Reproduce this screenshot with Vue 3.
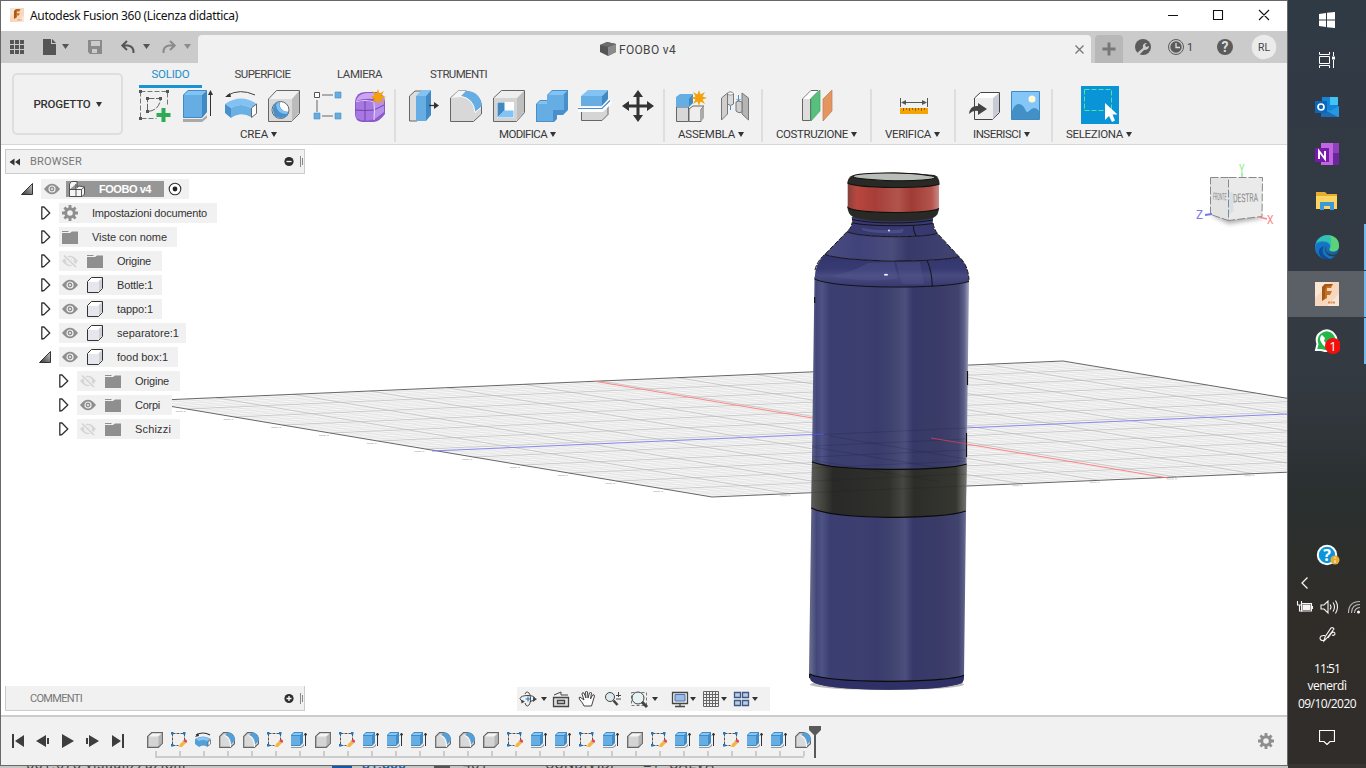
<script setup>
const vFit = {
  mounted(el, { value }) {
    const w = el.getBoundingClientRect().width
    el.style.letterSpacing = (value - w) / el.textContent.length + 'px'
  }
}

const tabs = [
  { t: 'SOLIDO', w: 38, c: 'solid' },
  { t: 'SUPERFICIE', w: 56, c: 'surface' },
  { t: 'LAMIERA', w: 45, c: 'sheet' },
  { t: 'STRUMENTI', w: 57, c: 'tools' }
]
const groups = [
  { t: 'CREA', w: 28, c: 'crea', icons: ['sketch', 'extrude', 'revolve', 'hole', 'pattern', 'form'] },
  { t: 'MODIFICA', w: 48, c: 'modifica', icons: ['press', 'fillet', 'shell', 'combine', 'split', 'move'] },
  { t: 'ASSEMBLA', w: 57, c: 'assembla', icons: ['newcomp', 'joint'] },
  { t: 'COSTRUZIONE', w: 72, c: 'costruzione', icons: ['plane'] },
  { t: 'VERIFICA', w: 46, c: 'verifica', icons: ['measure'] },
  { t: 'INSERISCI', w: 48, c: 'inserisci', icons: ['derive', 'canvas'] },
  { t: 'SELEZIONA', w: 57, c: 'seleziona', icons: ['select'] }
]
const rows = [
  { t: 'Impostazioni documento', w: 115, icon: 'gear', bw: 158 },
  { t: 'Viste con nome', w: 75, icon: 'folder', bw: 118 },
  { t: 'Origine', w: 34, eye: 'off', icon: 'folder', bw: 103 },
  { t: 'Bottle:1', w: 36, eye: 'on', icon: 'box', bw: 103 },
  { t: 'tappo:1', w: 36, eye: 'on', icon: 'box', bw: 103 },
  { t: 'separatore:1', w: 62, eye: 'on', icon: 'box', bw: 127 },
  { t: 'food box:1', w: 51, eye: 'on', icon: 'box', bw: 119, open: true },
  { t: 'Origine', w: 34, eye: 'off', icon: 'folder', bw: 103, deep: true },
  { t: 'Corpi', w: 25, eye: 'on', icon: 'folder', bw: 95, deep: true },
  { t: 'Schizzi', w: 36, eye: 'off', icon: 'folder', bw: 103, deep: true }
]
const kinds = { b: 'box3', s: 'sk', r: 'rev', f: 'fil', e: 'ext' }
const timeline = [...'bsrffsebseeeffbseesebseeseef'].map(k => kinds[k])

const L = [139, 401], T = [1063, 361], B = [712, 497], R = [1640, 457]
const mix = (p, q, t) => [p[0] + (q[0] - p[0]) * t, p[1] + (q[1] - p[1]) * t]
const seg = (p, q) => `M${p[0].toFixed(1)} ${p[1].toFixed(1)}L${q[0].toFixed(1)} ${q[1].toFixed(1)}`
let minor = '', major = '', ticks = ''
for (let i = 1; i < 60; i++) {
  const t = i / 60
  const d = seg(mix(L, B, t), mix(T, R, t)) + seg(mix(L, T, t), mix(B, R, t))
  if (i % 5) minor += d
  else major += d
}
for (let i = 1; i < 12; i++) {
  const p = mix(L, B, i / 12)
  ticks += `M${p[0] - 11} ${p[1] + 2.5}h10`
  const q = mix(B, R, i / 12)
  ticks += `M${q[0] - 9} ${q[1] + 2}h10`
}
</script>

<template>
  <div class="screen">
    <svg class="defs" width="0" height="0">
      <defs>
        <linearGradient id="body" x1="811" x2="968" y1="0" y2="0" gradientUnits="userSpaceOnUse">
          <stop offset="0" stop-color="#62678a" /><stop offset=".035" stop-color="#424778" />
          <stop offset=".07" stop-color="#4e5386" /><stop offset=".12" stop-color="#3b3e70" />
          <stop offset=".32" stop-color="#3c3f70" /><stop offset=".42" stop-color="#393c6d" />
          <stop offset=".52" stop-color="#40446f" /><stop offset=".6" stop-color="#4c4e7c" />
          <stop offset=".65" stop-color="#363868" /><stop offset=".82" stop-color="#3a3c67" />
          <stop offset=".94" stop-color="#41446f" /><stop offset=".975" stop-color="#5c6088" />
          <stop offset="1" stop-color="#9397b2" />
        </linearGradient>
        <linearGradient id="band" x1="811" x2="967" y1="0" y2="0" gradientUnits="userSpaceOnUse">
          <stop offset="0" stop-color="#5b5c57" /><stop offset=".08" stop-color="#41423c" />
          <stop offset=".14" stop-color="#292a27" /><stop offset=".5" stop-color="#30312d" />
          <stop offset=".59" stop-color="#464742" /><stop offset=".66" stop-color="#2c2d28" />
          <stop offset=".93" stop-color="#373732" /><stop offset="1" stop-color="#777873" />
        </linearGradient>
        <linearGradient id="red" x1="0" x2="1" y1="0" y2="0">
          <stop offset="0" stop-color="#87403c" /><stop offset=".1" stop-color="#b8473e" />
          <stop offset=".3" stop-color="#a63e37" /><stop offset=".55" stop-color="#b1544c" />
          <stop offset=".7" stop-color="#9e3b34" /><stop offset=".92" stop-color="#b3554d" />
          <stop offset="1" stop-color="#c98b86" />
        </linearGradient>
        <linearGradient id="cone" x1="825" x2="959" y1="0" y2="0" gradientUnits="userSpaceOnUse">
          <stop offset="0" stop-color="#4a4d80" /><stop offset=".25" stop-color="#40427a" />
          <stop offset=".5" stop-color="#4a4c7c" /><stop offset=".62" stop-color="#373969" />
          <stop offset="1" stop-color="#414472" />
        </linearGradient>
        <linearGradient id="shoulder" x1="0" x2="0" y1="0" y2="1">
          <stop offset="0" stop-color="#32346e" /><stop offset=".45" stop-color="#383a72" />
          <stop offset=".65" stop-color="#484b80" /><stop offset="1" stop-color="#36386f" />
        </linearGradient>
        <linearGradient id="tri" x1="0" x2="1" y1="1" y2="0"><stop offset="0" stop-color="#333" /><stop offset="1" stop-color="#ccc" /></linearGradient>
        <linearGradient id="edge" x1="0" x2="1" y1="0" y2="1"><stop offset="0" stop-color="#1c9bd9" /><stop offset="1" stop-color="#0e4f9b" /></linearGradient>
        <filter id="soft" x="-30%" y="-30%" width="160%" height="160%"><feGaussianBlur stdDeviation="2.2" /></filter>
      </defs>

      <!-- ribbon icons -->
      <symbol id="sketch" viewBox="0 0 34 34">
        <path d="M2.500 2.500h27v15M2.500 2.500v27h16" fill="none" stroke="#777" stroke-dasharray="5 2" />
        <path d="M9.500 9.500h13q-1 12-13 13z" fill="none" stroke="#666" stroke-dasharray="7 1.500" />
        <path d="M1 1h3v3H1zM28 1h3v3h-3zM1 28h3v3H1zM8 8h3v3H8zM21 8h3v3h-3zM8 21h3v3H8z" fill="#555" />
        <path d="M23.500 19h4v5h5v4h-5v5h-4v-5h-5v-4h5z" fill="#2eac55" />
      </symbol>
      <symbol id="extrude" viewBox="0 0 34 34">
        <path d="M2 30h19l5-4v3l-5 4H2z" fill="#a9a9a9" /><path d="M2 28h19l5-5v3l-5 4H2z" fill="#eee" />
        <path d="M2 6l5-5h19l-5 5z" fill="#83c3f4" /><path d="M2 6h19v23H2z" fill="#65ade3" /><path d="M21 6l5-5v22l-5 6z" fill="#4089c2" />
        <path d="M2.500 28.500V6L7 1.500h18.500v21l-5 6z" fill="none" stroke="#3c8cc8" />
        <path d="M29.500 4v23" stroke="#333" /><path d="M29.500 1l2.500 5h-5z" fill="#333" />
      </symbol>
      <symbol id="revolve" viewBox="0 0 34 34">
        <path d="M3 6.500Q16-1 31 6" fill="none" stroke="#444" /><path d="M1 8l5-4 1 4z" fill="#333" />
        <path d="M1 15Q17 4 33 15l-6 4Q17 13 7 19z" fill="#82c1f1" /><path d="M1 15l6 4v10l-6-5z" fill="#4790cb" />
        <path d="M7 19q10-6 20 0v9q-10-6-20 1z" fill="#69b0e4" /><path d="M27.500 19l5-4v9.500l-5 4z" fill="#fff" stroke="#666" />
      </symbol>
      <symbol id="hole" viewBox="0 0 34 34">
        <path d="M1.500 10l8-8.500h23v23l-8 8h-23z" fill="#f2f2f2" stroke="#666" /><path d="M25 10l7-8v22l-7 8z" fill="#bbb" /><path d="M2 10h23v22H2z" fill="#dadada" />
        <circle cx="13.500" cy="21" r="8.500" fill="#fff" stroke="#666" /><path d="M6 21q0 8 8 8t7.500-6.500q-4 1-7-2.500t-1-7Q6 13 6 21z" fill="#4790cb" /><path d="M9 16q1 9 11 9l1-2.500q-4 1-7-2.500t-1-7q-3 .5-4 3z" fill="#80c1f2" />
      </symbol>
      <symbol id="pattern" viewBox="0 0 34 34">
        <path d="M12 6h11M7 11v12M12 27h11" stroke="#666" /><path d="M4.500 3.500h5v5h-5z" fill="#fff" stroke="#555" />
        <path d="M25 3h6v6h-6zM4 24h6v6H4zM25 24h6v6h-6z" fill="#65ade3" stroke="#4e8fbe" stroke-width=".6" />
      </symbol>
      <symbol id="form" viewBox="0 0 34 34">
        <path d="M2 13Q3 3 12 3h12q8 2 8 10v12q-5 7-11 8H9q-7-1-7-8z" fill="#8d59c8" />
        <path d="M3 12q2-7 10-8h12l-5 6q-9-1-17 2z" fill="#c9a6f3" /><path d="M3 14q9-4 18 0v16q-9 4-18-1z" fill="#a678e2" />
        <path d="M22 13l9-6v16l-9 7z" fill="#b690ea" />
        <path d="M12 11v21M2 21q10 1 19 0l10-5" fill="none" stroke="#7443ad" stroke-width="1" /><path d="M22 12l8-5M3 13q9-3 18 0 1 9 0 18" fill="none" stroke="#e4d1fa" stroke-width="1.200" />
        <use href="#star" x="17" y="0" width="16" height="16" />
      </symbol>
      <symbol id="star" viewBox="0 0 16 16"><path d="M8 0l1.500 4.500L14 2l-2.500 4.500L16 8l-4.500 1.500L14 14l-4.500-2.500L8 16l-1.500-4.500L2 14l2.500-4.500L0 8l4.500-1.500L2 2l4.500 2.500z" fill="#f2a10c" /></symbol>
      <symbol id="press" viewBox="0 0 34 34">
        <path d="M3.500 32V7L9 2h8l-6 6v24z" fill="#ddd" stroke="#666" /><path d="M10 7l6-6h9l-5 6z" fill="#83c3f4" /><path d="M10 7h10v25H10z" fill="#65ade3" /><path d="M20 7l5-6v25l-5 6z" fill="#4089c2" />
        <path d="M23 16.500h7" stroke="#333" stroke-width="1.300" /><path d="M28 13l5 3.500-5 3.500z" fill="#333" />
      </symbol>
      <symbol id="fillet" viewBox="0 0 34 34">
        <path d="M1.500 32.500V9L9 2h8q15 3 15.500 15v8l-8 7.500z" fill="#d8d8d8" stroke="#666" /><path d="M2 9l7-7h8l-5 6z" fill="#f5f5f5" />
        <path d="M12 7l5-5q14 0 16 15l-7 6Q24 9 12 7z" fill="#65ade3" /><path d="M12 7.500q13 2 14 16l6-5" fill="none" stroke="#fff" />
      </symbol>
      <symbol id="shell" viewBox="0 0 34 34">
        <path d="M1.500 9l8-7.500h23v22l-8 9h-23z" fill="#eee" stroke="#666" /><path d="M2 9h23v23H2z" fill="#d4d4d4" /><path d="M25 9l7-7v21l-7 9z" fill="#bfbfbf" /><path d="M5 13h17v16H5z" fill="#fff" />
        <path d="M5.500 13.500v15l7-7v-8z" fill="#4089c2" /><path d="M5.500 28.500h16v-7h-9z" fill="#83c3f4" />
      </symbol>
      <symbol id="combine" viewBox="0 0 34 34">
        <path d="M1 15l4-4h7V6l5-5h16v20l-5 5h-6v4l-3 3H1z" fill="#4790cb" /><path d="M2 15h10V6h17v15H18v11H2z" fill="#65ade3" /><path d="M13 6l4-4h15l-4 4zM2 15l3-3h7v3z" fill="#83c3f4" />
      </symbol>
      <symbol id="split" viewBox="0 0 34 34">
        <path d="M3 7l7-6h20l-6 6z" fill="#83c3f4" /><path d="M3 7h21v10H3z" fill="#65ade3" /><path d="M24 7l6-6v9l-6 7z" fill="#4089c2" />
        <path d="M3.500 22v9.500h20.500l6-6V16" fill="#d5d5d5" stroke="#666" /><path d="M0 20.500h24l9-9" fill="none" stroke="#fff" stroke-width="5" /><path d="M0 19.500h24l8-8" fill="none" stroke="#4790cb" stroke-width="1.200" />
      </symbol>
      <symbol id="move" viewBox="0 0 34 34"><path d="M17 1l5 7h-3.500v7.500H26V12l7 5-7 5v-3.500h-7.500V26H22l-5 7-5-7h3.500v-7.500H8V22l-7-5 7-5v3.500h7.500V8H12z" fill="#333" /></symbol>
      <symbol id="newcomp" viewBox="0 0 34 34">
        <path d="M2.500 18h12v14.500h-12z" fill="#d7d7d7" stroke="#666" /><path d="M15 20l4-3h11l-3 3v12.500H15z" fill="#eee" stroke="#666" /><path d="M27 20l3-3v12l-3 3.500z" fill="#aaa" />
        <path d="M2 8l4-3h13l-4 4v9H2z" fill="#65ade3" /><path d="M15 9l4-4v9l-4 4z" fill="#4089c2" /><use href="#star" x="17" y="1" width="16" height="16" />
      </symbol>
      <symbol id="joint" viewBox="0 0 34 34">
        <path d="M4.500 9l6-5v21l-6 6z" fill="#cfcfcf" stroke="#777" /><path d="M10.500 5q3-4 6 0v10q-3 3-6 0z" fill="#dadada" stroke="#777" /><ellipse cx="13.500" cy="4.500" rx="2.800" ry="1.500" fill="#fff" stroke="#777" stroke-width=".7" />
        <path d="M31.500 9l-6.500-5v21l6.500 6z" fill="#b5b5b5" stroke="#777" /><path d="M25 13q-3-2-6 0v9q3 3 6 1z" fill="#cfcfcf" stroke="#777" /><path d="M13.500 17v4M21.500 6v6m-2-2l2 2 2-2" fill="none" stroke="#3d91d1" />
      </symbol>
      <symbol id="plane" viewBox="0 0 34 34">
        <path d="M2.500 31.500V10L11 1.500h7L10.500 10v21.500z" fill="#ddd" stroke="#666" /><path d="M3 10l8-8h7l-8 8z" fill="#fff" /><path d="M11 10l9-9v21l-9 10z" fill="#58c07c" stroke="#3fa864" stroke-width=".7" /><path d="M23 10l9-9v21l-9 10z" fill="#e59560" stroke="#bd7d56" stroke-width=".7" />
      </symbol>
      <symbol id="measure" viewBox="0 0 34 34">
        <path d="M3.500 9v9M30.500 9v9M5 13.500h24" stroke="#555" /><path d="M4 13.500l5-2.500v5zM30 13.500l-5-2.500v5z" fill="#555" /><path d="M3 19h28v6H3z" fill="#f5a404" /><path d="M6.500 19v3M9.500 19v2M12.500 19v3M15.500 19v2M18.500 19v3M21.500 19v2M24.500 19v3M27.500 19v2" stroke="#8a6518" />
      </symbol>
      <symbol id="derive" viewBox="0 0 34 34">
        <path d="M6.500 9l6-5.500h19v20l-7 7h-18z" fill="#fff" stroke="#444" /><path d="M25 9l6-5v19l-6 7z" fill="#c7cbd3" /><path d="M7 9h18v21H7z" fill="#eee" /><path d="M1 25q1-9 9-8v-3l9 6-9 6v-4q-5-1-9 3z" fill="#444" />
      </symbol>
      <symbol id="canvas" viewBox="0 0 34 34">
        <path d="M2.500 2.500h28v28h-28z" fill="#84c6f8" stroke="#3b8bc2" /><path d="M3 22q3-7 7-7 4 0 7 7 1 2 3 0 6-6 10 0v8H3z" fill="#4390c7" /><circle cx="23" cy="10" r="3.500" fill="#fdfbd6" />
      </symbol>
      <symbol id="select" viewBox="0 0 38 38">
        <path d="M0 0h38v38H0z" fill="#0a94d8" /><path d="M3.500 3.500h27v21h-27z" fill="none" stroke="#51e1a3" stroke-dasharray="5 2" /><path d="M24 17v17l4-4 3 6 3-1.500-2.500-6h5z" fill="#fff" />
      </symbol>

      <!-- browser icons -->
      <symbol id="gear" viewBox="0 0 16 16"><circle cx="8" cy="8" r="4.300" fill="none" stroke="#8e8e8e" stroke-width="3" /><path d="M8 0v3M8 13v3M0 8h3M13 8h3M2.400 2.400l2 2M11.600 11.600l2 2M2.400 13.600l2-2M11.600 4.400l2-2" stroke="#8e8e8e" stroke-width="2.800" /></symbol>
      <symbol id="folder" viewBox="0 0 16 16"><path d="M0 2h6l1 1h-7zM0 4h8l2-1.500h6V15H0z" fill="#8f8f8f" /></symbol>
      <symbol id="box" viewBox="0 0 16 16"><path d="M.5 4.500l4-4h11v11l-4 4H.5z" fill="#fff" stroke="#333" stroke-linejoin="round" /><path d="M11.500 4.500l3.500-3.500v10l-3.500 4z" fill="#cdd0d6" /><path d="M1 5h10v10H1z" fill="#e6e7ec" /></symbol>
      <symbol id="on" viewBox="0 0 16 16"><path d="M0 8q8-10.500 16 0-8 10.500-16 0z" fill="#8f8f8f" /><circle cx="8" cy="8" r="3" fill="none" stroke="#f1f1f1" stroke-width="1.200" /><circle cx="8" cy="8" r="1" fill="#f1f1f1" /></symbol>
      <symbol id="off" viewBox="0 0 16 16"><path d="M0 8q8-10.500 16 0-8 10.500-16 0z" fill="#d6d6d6" /><circle cx="8" cy="8" r="3" fill="none" stroke="#f1f1f1" stroke-width="1.500" /><path d="M1.500 2l13 12.500" stroke="#f1f1f1" stroke-width="3.500" /><path d="M2 2.500l12 11.500" stroke="#cfcfcf" stroke-width="1.300" /></symbol>
      <symbol id="shut" viewBox="0 0 10 14"><path d="M.8 1v12l2.200-.5L8.800 7 3 1z" fill="#fff" stroke="#333" stroke-width="1.300" stroke-linejoin="round" /></symbol>
      <symbol id="open" viewBox="0 0 12 12"><path d="M.5 11.500h11V.5z" fill="url(#tri)" stroke="#333" /></symbol>

      <!-- timeline icons -->
      <symbol id="box3" viewBox="0 0 16 16"><path d="M.7 15.300V4.500l4-3.800h10.600v10.600l-4 4z" fill="#d4d4d4" stroke="#666" stroke-width="1.300" /><path d="M1.500 4.500l3.500-3h9.500l-3 3z" fill="#f5f5f5" /><path d="M11.500 4.500l3-3v10l-3 3z" fill="#b5b5b5" /></symbol>
      <symbol id="sk" viewBox="0 0 16 16"><path d="M1.500 1.500h12v7M1.500 1.500v12h6" fill="none" stroke="#555" stroke-dasharray="3 1" /><path d="M0 0h2.500v2.500H0zM12 0h2.500v2.500H12zM0 12h2.500v2.500H0z" fill="#1a7acb" /><path d="M8 15l1-3 3-3 3 2-4 4z" fill="#f5b942" /><path d="M12 9l2-2 2 1.500v1.500l-1 1z" fill="#e14b56" /></symbol>
      <symbol id="rev" viewBox="0 0 16 16"><path d="M1 3q7-4 14 0" fill="none" stroke="#333" stroke-width="1.200" /><path d="M0 5l3-4 1 3z" fill="#333" /><path d="M0 7q8-5 16 0l-3 3v5q-5-3-9 0l-4-3z" fill="#559fd8" /><path d="M1 7q7-4 14 0l-3 2q-4-2-8 0z" fill="#88c7f5" /><path d="M13 10l2.500-2v4L13 14z" fill="#fff" stroke="#555" stroke-width=".7" /></symbol>
      <symbol id="fil" viewBox="0 0 16 16"><path d="M.7 15.300V4.500L4.500.7h4q7 1 7 8v3l-4 3.600z" fill="#d9d9d9" stroke="#666" stroke-width="1.200" /><path d="M6 3L9 .5q7 1 7 8l-4 4Q12 5 6 3z" fill="#559fd8" /><path d="M5.500 3.500q6 2 6 11.500" fill="none" stroke="#fff" /></symbol>
      <symbol id="ext" viewBox="0 0 16 16"><path d="M0 15h10l3-3v2l-3 2H0z" fill="#999" /><path d="M0 3l3-3h9v11l-3 3H0z" fill="#3f8cc9" /><path d="M0 4h9v9H0z" fill="#65ade3" /><path d="M1 3l2-2h8L9 3z" fill="#88c7f5" /><path d="M14.500 2v12M13 3.500L14.500 1 16 3.500" fill="none" stroke="#333" /></symbol>
      <symbol id="fusion" viewBox="0 0 24 24"><path d="M0 0h24v24H0z" fill="#fbe6d4" /><path d="M0 16L16 0h8v12L12 24H0z" fill="#f5ceaf" opacity=".6" /><path d="M7 5l3-3h8l-2 4h-4v3h5l-2 4h-3v3l-5 3z" fill="#c66f1f" /><path d="M7 5l3-3h8l-2.500 2h-4L10 7v9l-3 3z" fill="#8f4b17" opacity=".65" /><path d="M13 20.500h7" stroke="#dd8b51" stroke-width="1.800" stroke-dasharray="2 .5" /></symbol>
    </svg>

    <main class="window">
      <header class="titlebar">
        <svg class="logo" width="14" height="14"><use href="#fusion" width="14" height="14" /></svg>
        <span v-fit="208" class="wtitle">Autodesk Fusion 360 (Licenza didattica)</span>
        <svg class="wctl" width="104" height="14" viewBox="0 0 104 14" fill="none" stroke="#111" stroke-width="1.100">
          <path d="M1 7.500h10M46.500 2.500h9v9h-9zM92 2l10 10M102 2L92 12" />
        </svg>
      </header>

      <div class="docbar">
        <svg class="quick" width="197" height="32" viewBox="1 31 197 32">
          <g fill="#555"><path v-for="i in 9" :key="i" :d="`M${10 + ((i - 1) % 3) * 5} ${40 + Math.floor((i - 1) / 3) * 5}h4v4h-4z`" />
            <path d="M43 39h8v5h5v11H43zM52 39l4 4h-4z" />
            <path d="M62 44h7l-3.500 5zM143 44h7l-3.500 5z" />
          </g>
          <path d="M184 44h7l-3.500 5z" fill="#8c8c8c" />
          <path d="M88 40h14v14H90l-2-2zM91 41v5h9v-5zM92 49v4h7v-4z" fill="#8a8a8a" fill-rule="evenodd" /><path d="M97 49h2v4h-2z" fill="#8a8a8a" />
          <path d="M123 45.500h5q6 1 5.500 7.500M127 41l-4.700 4.500L127 50" fill="none" stroke="#555" stroke-width="2" />
          <path d="M174 45.500h-5q-6 1-5.500 7.500M170 41l4.700 4.500L170 50" fill="none" stroke="#8a8a8a" stroke-width="2" />
        </svg>
        <div class="doctab">
          <svg width="16" height="14" viewBox="0 0 16 14"><path d="M0 3l7-3 9 2v8l-8 4-8-4z" fill="#555" /><path d="M8 5l8-3v8l-8 4z" fill="#8b8b8b" /><path d="M0 3l7-3 9 2-8 3z" fill="#6c6c6c" /></svg>
          <span v-fit="57">FOOBO v4</span>
          <svg class="x" width="9" height="9" viewBox="0 0 9 9"><path d="M.5.500l8 8M8.500.500l-8 8" stroke="#777" stroke-width="1.300" /></svg>
        </div>
        <div class="plus"><svg width="14" height="14" viewBox="0 0 14 14"><path d="M7 .5v13M.5 7h13" stroke="#777" stroke-width="3" /></svg></div>
        <svg class="account" width="164" height="32" viewBox="1123 31 164 32">
          <circle cx="1143" cy="47" r="8" fill="#5b5b5b" /><path d="M1137 53l6-5q-1-5 4-5l-2 2 1 2 3-1q0 4-5 4l-5 5z" fill="#cbcbcb" />
          <circle cx="1176" cy="47" r="7.500" fill="none" stroke="#5b5b5b" /><circle cx="1176" cy="47" r="5.700" fill="#5b5b5b" /><path d="M1176 43v4.500h4" fill="none" stroke="#ddd" stroke-width="1.300" />
          <circle cx="1225" cy="47" r="8" fill="#5b5b5b" /><circle cx="1264" cy="47" r="12.300" fill="#ebebeb" />
          <g font-family="Roboto, sans-serif" fill="#444" text-anchor="middle"><text x="1190" y="51" font-size="11">1</text><text x="1264" y="51" font-size="11" textLength="12" lengthAdjust="spacingAndGlyphs">RL</text><text x="1225" y="52" font-size="14" font-weight="700" fill="#ddd">?</text></g>
        </svg>
      </div>

      <div class="ribbon">
        <div class="project"><span v-fit="57">PROGETTO</span><i class="caret" /></div>
        <div class="tools-area">
          <nav class="tabs"><div v-for="t in tabs" :key="t.t" :class="['tab', t.c]"><span v-fit="t.w">{{ t.t }}</span></div></nav>
          <div class="groups">
            <section v-for="g in groups" :key="g.t" :class="['group', g.c]">
              <div class="icons"><svg v-for="i in g.icons" :key="i" class="tool"><use :href="'#' + i" /></svg></div>
              <div class="glabel"><span v-fit="g.w">{{ g.t }}</span><i class="caret" /></div>
            </section>
          </div>
        </div>
      </div>

      <div class="viewport">
        <svg class="scene" width="1286" height="570" viewBox="1 145 1286 570">
          <path d="M139 401L1063 361 1640 457 712 497z" fill="#f8f8f8" />
          <path :d="minor" stroke="#d8d8d8" stroke-width=".45" /><path :d="major" stroke="#a9a9a9" stroke-width=".55" />
          <path :d="ticks" stroke="#bbb" stroke-width=".7" stroke-dasharray="7 1 2 1" />
          <path d="M139 401L1063 361 1640 457 712 497z" fill="none" stroke="#555" stroke-width=".9" />
          <path d="M595 381.300L1168 478" stroke="#ff7777" stroke-width=".9" /><path d="M432 451L1287 414" stroke="#7c7cf5" stroke-width=".9" />

          <ellipse cx="887" cy="684.500" rx="77" ry="5.500" fill="#bbb" />
          <path d="M814.500 277H969L964 676q0 5-2 7-16 6.500-74 6.700-68-.4-77-9-2-2-2-6.700z" fill="url(#body)" />
          <path d="M809.500 674C830 683.500 945 683.500 964 675.300q0 5.500-2 7.700-16 6.500-74 6.700-68-.4-77-9z" fill="#2e3066" />
          <path d="M812 461.700C835 471.500 945 471.500 966.700 464l-1 47C943 519.900 835 519.900 811.300 508z" fill="url(#band)" />
          <path d="M812 435L966 428M812 446L966 439M812 457L966 450M812 468L966 461M812 481L966 474M812 492.500L966 486M830 436L966 459M812 447L940 468M812 460L940 482" stroke="#161626" stroke-width=".45" opacity=".4" />

          <path d="M825 254.300C845 262.700 940 262.700 959 256.700q9.500 8 10 24.800C945 289.300 835 289.300 814.500 279q.5-16 10.500-24.700z" fill="url(#shoulder)" />
          <path d="M868 263q-14 9-38 13 32 7 68 3l-4-17z" fill="#555990" opacity=".4" /><path d="M896 262h24l4 22h-22z" fill="#5a5d93" opacity=".3" />
          <path d="M847 231.700C860 238.100 925 238.100 937 233.300L959 256.700C940 262.700 845 262.700 825 254.300z" fill="url(#cone)" />
          <path d="M851.700 217H933l-.3 6.300q1 6 4.300 10C925 238.100 860 238.100 847 231.700q4.500-4 5.300-9z" fill="#373970" />
          <path d="M862 230q12 4 40 3l2-4q-24 3-42-1z" fill="#6165a0" opacity=".45" />
          <path d="M852 219.500q18 3.500 41 3.500t40-3M852.300 222.700C865 226.600 920 226.600 932.700 223.300M847 231.700C860 238.100 925 238.100 937 233.300M825 254.300C845 262.700 940 262.700 959 256.700M814.500 279C835 289.300 945 289.300 969 281.500M913.300 226q0 5 2.700 10M927.300 261q4.500 10 5 25.500" fill="none" stroke="#111" stroke-width=".95" />
          <circle cx="889" cy="230.600" r="1" fill="#e8e8ff" /><ellipse cx="886" cy="274.800" rx="2.200" ry="1" fill="#e8e8ff" />
          <path d="M815 270q2-9 10-15.700L847 231.700q4.500-4 5-9M933 223q1 6 4.500 10.500L959 256.700q9 8 10 23" fill="none" stroke="#111" stroke-width="1" stroke-dasharray="5 1.500" />
          <path d="M814.700 297v6M967.500 371v14M966.500 433v24M809.700 674v4" fill="none" stroke="#111" stroke-width="1.200" />

          <path d="M847.500 206H939q.5 9-6 12-14 3.500-40 3.500t-40-4.500q-5.500-3-5.500-11z" fill="#292a26" />
          <path d="M847.700 181H939v27.500q-8 4-46 4-39-.5-45.300-5z" fill="url(#red)" />
          <path d="M847.500 183q0-6 6-8 40-5 81 0 5 2 5 9-8 3.500-46 3.500-39-.500-46-4.500z" fill="#292a26" /><ellipse cx="894" cy="176.900" rx="41" ry="3.800" fill="#b9bdb7" stroke="#111" transform="rotate(1 894 176.900)" />
          <path d="M847.500 183q7 4 46 4.500 38 0 46-3.500M847.500 207.500q6.500 4.500 45.500 5 38 0 46-4" fill="none" stroke="#111" stroke-width="1.100" />
          <path d="M812 461.700C835 471.500 945 471.500 966.700 464M811.300 508C835 519.900 943 519.900 965.700 511M809.500 674C830 683.500 945 683.500 964 675.300" fill="none" stroke="#0b0b0b" stroke-width="1.200" />
          <path d="M931 438L967 444" stroke="#c93d57" stroke-width=".9" /><path d="M812 434.600l12-.5" stroke="#5454dd" />

          <g>
            <path d="M1210 215l19 9 36-6-20-6z" fill="#888" opacity=".65" filter="url(#soft)" />
            <path d="M1210.500 177.500h18v43l-18-6z" fill="#e3e3e3" /><path d="M1228.500 177.500h34l-.5 39-33.500 4z" fill="#eaeaea" /><path d="M1228.500 191l5 2v18l-5 4z" fill="#d7e0e6" />
            <path d="M1210.500 177.500h18v43l-18-6zM1228.500 177.500h34l-.5 39-33.500 4" fill="none" stroke="#888" stroke-dasharray="8 2" />
            <path d="M1242 173v4" stroke="#86ef86" stroke-width="1.500" /><path d="M1205 215l7-1" stroke="#7777e5" stroke-width="2" /><path d="M1259 217l8 2" stroke="#f38b8b" stroke-width="1.500" />
            <g font-family="Roboto, sans-serif" font-size="12"><text x="1239" y="173" font-size="13" fill="#86ef86" textLength="5.500" lengthAdjust="spacingAndGlyphs">Y</text><text x="1196" y="219" fill="#7b7bee" textLength="7" lengthAdjust="spacingAndGlyphs">Z</text><text x="1267" y="224" fill="#f48585" textLength="6.500" lengthAdjust="spacingAndGlyphs">X</text>
              <text x="1233" y="202" fill="#888" textLength="25" lengthAdjust="spacingAndGlyphs" transform="rotate(-2 1245 198)">DESTRA</text><text x="1213" y="200" font-size="10" fill="#888" textLength="13.500" lengthAdjust="spacingAndGlyphs" transform="rotate(3 1219 197)">FRONTE</text></g>
          </g>
        </svg>

        <aside class="side">
          <div class="phead">
            <svg width="12" height="8" viewBox="0 0 12 8"><path d="M5.500.500v7L.500 4zM11 .5v7L6 4z" fill="#333" /></svg>
            <span v-fit="52">BROWSER</span><svg class="pbtn" width="19" height="13" viewBox="0 0 19 13"><circle cx="5" cy="6.500" r="4.600" fill="#2e2e2e" /><path d="M2.500 6.500h5" stroke="#fff" stroke-width="1.300" /><path d="M16.500 1v11M18.500 3v7" stroke="#888" /></svg>
          </div>
          <div class="tree">
            <div class="row root">
              <svg width="12" height="12"><use href="#open" /></svg>
              <div class="pill">
                <svg width="16" height="16"><use href="#on" /></svg>
                <div class="chosen"><svg width="16" height="16" viewBox="0 0 16 16"><path d="M.5 3l2-2.500h5.500v6l2-1.500 5.500 1v7l-2.500 2.500H.5zM.5 8.500h6.500V3M7 8.500v7M7 8.500h5.500v7M12.500 8.500l3-2.500" fill="#f5f5f5" stroke="#444" stroke-width=".9" /></svg><span v-fit="52">FOOBO v4</span></div>
                <svg width="14" height="14" viewBox="0 0 14 14"><circle cx="7" cy="7" r="5.800" fill="#fff" stroke="#333" stroke-width="1.100" /><circle cx="7" cy="7" r="2.400" fill="#222" /></svg>
              </div>
            </div>
            <div v-for="(r, i) in rows" :key="i" :class="['row', { deep: r.deep }]">
              <svg v-if="r.open" class="arr op" width="12" height="12"><use href="#open" /></svg><svg v-else class="arr" width="10" height="14"><use href="#shut" /></svg>
              <div class="pill" :style="{ width: r.bw + 'px' }">
                <svg v-if="r.eye" class="eye" width="16" height="16"><use :href="'#' + r.eye" /></svg>
                <svg class="kind" width="16" height="16"><use :href="'#' + r.icon" /></svg><span v-fit="r.w">{{ r.t }}</span>
              </div>
            </div>
          </div>
          <div class="phead comments"><span v-fit="52">COMMENTI</span><svg class="pbtn" width="19" height="13" viewBox="0 0 19 13"><circle cx="5" cy="6.500" r="4.600" fill="#2e2e2e" /><path d="M2.500 6.500h5M5 4v5" stroke="#fff" stroke-width="1.300" /><path d="M16.500 1v11M18.500 3v7" stroke="#888" /></svg></div>
        </aside>

        <svg class="navbar" width="253" height="24" viewBox="517 687 253 24" fill="none" stroke="#444">
          <path d="M524 701.500q-4-1-4-3 1-3 8-3 6 0 7 3-1 2.500-5 3M525 694q1-2.500 2.500-2 3 1 3 7t-3 7q-1.500.5-2.500-3" /><path d="M525.500 699h5M528 696.500v5" stroke="#1a75bd" /><path d="M533 697l4 2-4 3zM521 700l4 1.500-3.500 2z" fill="#444" stroke="none" />
          <path d="M553.500 697.500h15v9h-15zM557.500 700.500h7v3h-7z" stroke-width="1.300" fill="#ddd" /><path d="M554 695l7-3v3h7" />
          <path d="M584 706q-1-3-4-6-2-3 0-3l4 3-2-6q0-2 2-1l2 5-.500-6q1-2 2 0l.500 6 1.500-5q1-2 2 0l-1 6 2-4q2-1 2 1l-3 10z" fill="#fff" stroke-linejoin="round" />
          <circle cx="610" cy="697" r="4.500" fill="#dceaf0" /><path d="M613.500 700.500l4 4.500" stroke-width="2.600" /><path d="M616 695.500h5M618.500 692v5M616 699h5" />
          <path d="M631.500 692.500h15v13h-15z" stroke-dasharray="3 2" stroke="#777" /><circle cx="638" cy="698" r="6" fill="#e7f3f3" /><path d="M642 702l5 5" stroke-width="3" />
          <path d="M672.500 692.500h15v11h-15zM675 706.500h10M680 703v3" stroke-width="1.300" /><path d="M675 694.500h10v6.500h-10z" fill="#9cbce8" stroke="#4f74a7" />
          <path d="M703.500 691.500h15v15h-15zM706.500 691.500v15M709.500 691.500v15M712.500 691.500v15M715.500 691.500v15M703.500 694.500h15M703.500 697.500h15M703.500 700.500h15M703.500 703.500h15" stroke="#666" />
          <path d="M734.500 692.500h6v5h-6zM742.500 692.500h6v5h-6zM734.500 700.500h6v5h-6zM742.500 700.500h6v5h-6z" fill="#b7cdf0" stroke="#40597f" stroke-width="1.300" />
          <path v-for="x in [544, 655, 693, 724, 755]" :key="x" :d="`M${x - 3} 697h6l-3 4z`" fill="#333" stroke="none" />
        </svg>
      </div>

      <footer class="timeline">
        <svg class="play" width="112" height="14" viewBox="11 734 112 14" fill="#3d3d3d"><path d="M12 734h2v14h-2zM24 735v12l-9-6zM46 735v12l-10-6zM47 738h2v6h-2zM62 734v14l12-7zM86 738h2v6h-2zM89 735v12l10-6zM112 735v12l9-6zM122 734h2v14h-2z" /></svg>
        <div class="history">
          <div v-for="(k, i) in timeline" :key="i" class="step"><svg width="16" height="16"><use :href="'#' + k" /></svg></div>
          <svg class="marker" width="12" height="32" viewBox="0 0 12 32"><path d="M0 0h12v4L7 9v23H5V9L0 4z" fill="#595959" /></svg>
        </div>
        <svg class="settings" width="16" height="16"><use href="#gear" /></svg>
      </footer>
    </main>

    <div class="behind"><span v-fit="160" class="b1">551.678 visualizzazioni</span><i class="like" /><span v-fit="44" class="b2">31.800</span><i class="dislike" /><span v-fit="25" class="b3">481</span><span v-fit="69" class="b4">CONDIVIDI</span><span v-fit="72" class="b5">≡+ &nbsp;SALVA</span><span v-fit="20" class="b6">•••</span></div>

    <aside class="taskbar">
      <div class="slot sys"><svg width="16" height="16" viewBox="0 0 16 16"><path d="M0 2l7-1v6.500H0zM8 .8L16 0v7.500H8zM0 8.500h7V15l-7-1zM8 8.500h8V16l-8-.8z" fill="#fff" /></svg></div>
      <div class="slot sys"><svg width="16" height="16" viewBox="0 0 16 16" fill="none" stroke="#fff"><path d="M.5 4.500h10v7H.5zM.5 0v2.500h10V0M.5 16v-2.500h10V16M14.500 0v4M14.500 8v8" /><path d="M13 4.500h3v3h-3z" fill="#fff" stroke="none" /></svg></div>
      <div class="slot first"><svg width="24" height="24" viewBox="0 0 24 24"><path d="M7 2h16v16H7z" fill="#1685d5" /><path d="M15 2h8v8h-8z" fill="#43c3f4" /><path d="M6 20V11l9 5 9-5v11H6z" fill="#2499df" /><path d="M6 13l17 9H6z" fill="#1c6cb7" /><path d="M0 6h12v12H0z" fill="#0c67b8" /><circle cx="6" cy="12" r="3" fill="none" stroke="#fff" stroke-width="1.700" /></svg></div>
      <div class="slot"><svg width="24" height="24" viewBox="0 0 24 24"><path d="M6 1h18v22H6z" fill="#c066e0" /><path d="M18 1h6v22h-6z" fill="#9140bd" /><path d="M18 11h6v12h-6z" fill="#6c259b" /><path d="M0 6h14v14H0z" fill="#7719aa" /><path d="M4 17V9l6 8V9" fill="none" stroke="#fff" stroke-width="1.900" /></svg></div>
      <div class="slot"><svg width="24" height="24" viewBox="0 0 24 24"><path d="M1 3h9l2 2h10v15H1z" fill="#e8ad30" /><path d="M1 7h21v13H1z" fill="#fcd462" /><path d="M5 21v-8h14v8h-4v-4H9v4z" fill="#3a9ad9" /></svg></div>
      <div class="slot run"><svg width="24" height="24" viewBox="0 0 24 24"><circle cx="12" cy="12" r="12" fill="url(#edge)" /><path d="M1 8Q5 0 13 0q11 1 11 10.500 0 5-5 6-5 0-4.500-2.500Q17 8 10 6.500 4 5.500 1 8z" fill="#32bfb4" /><path d="M14 .2q10 2 10 10.500 0 5-5 5.800-5 0-4.500-2.500 3-2 1.500-6Q17 3 14 .2z" fill="#65d866" opacity=".8" /><path d="M0 12Q2 7 8 7.500q6 .5 7 4.500l-3-1q-4 2-2 6 3 6 11 3-4 5-11 4Q1 22 0 12z" fill="#1575c4" /><path d="M9 11q-3 4 0 9 3 3 6 3.500Q6 26 4 18q-1-5 5-7z" fill="#0f4c96" /><path d="M12 10.500q-3 5 1.500 8 5 3 10-.5-2 3.500-6 3.500-5-.5-7-5-1-4 1.500-6z" fill="#303a45" /></svg></div>
      <div class="slot run active"><svg width="24" height="24"><use href="#fusion" /></svg></div>
      <div class="slot run"><svg width="26" height="26" viewBox="0 0 26 26"><path d="M2 22l1.500-6Q1 9 6 5q6-5 12-1 6 5 4 12-3 8-11 7l-4-1z" fill="#24b64a" stroke="#fff" stroke-width="2" /><path d="M8 7l3 3-1 3 4 4 3-1 2 3q-8 4-13-7 0-4 2-5z" fill="#fff" /><circle cx="19" cy="18" r="8" fill="#f2100d" /><text x="19" y="23" font-family="Open Sans, sans-serif" font-size="13" text-anchor="middle" fill="#fff">1</text></svg></div>
      <div class="tray">
        <svg width="78" height="104" viewBox="1288 542 78 104" fill="none" stroke="#f5f5f5" stroke-width="1.100">
          <circle cx="1327" cy="555" r="9.200" fill="#0a95da" stroke="#fff" stroke-width="2" /><text x="1327" y="561" font-family="Open Sans, sans-serif" font-size="16" font-weight="700" text-anchor="middle" fill="#fff" stroke="none">?</text><circle cx="1335" cy="560" r="4.500" fill="#e9ad31" stroke="none" /><path d="M1335 557v1.500M1335 560v3" />
          <path d="M1307.500 577.500l-5.500 5.500 5.500 5.500" stroke-width="1.300" />
          <path d="M1301.500 603.500h10v7.500h-10z" /><path d="M1303 605h7v4.500h-7z" fill="#f5f5f5" /><path d="M1312.500 606v3M1297.500 601v4h4v-4M1299.500 605v6h3" />
          <path d="M1321 605h3l4-4v12l-4-4h-3zM1330 604.500q2 2.500 0 5M1333 602.500q3 4.500 0 9M1335.500 600.500q4 6.500 0 13" />
          <path d="M1348.500 613q0-11.500 11.500-11.500M1351.500 613q0-8.500 8.500-8.500M1354.500 613q0-5 5.500-5.500" stroke="#bbb" /><circle cx="1358.500" cy="612" r="1.500" fill="#fff" stroke="none" />
          <path d="M1325 635.500q-5-.5-5 3 1 3 4.500 1.500M1324 641l1-4 6-9q2-1 3 1l-7 9zM1328 638l5-7M1331 633q4-2 4 1-1 2-3 1" />
        </svg>
      </div>
      <div class="clock"><span v-fit="26">11:51</span><span v-fit="39">venerdì</span><span v-fit="58">09/10/2020</span></div>
      <svg class="note" width="16" height="16" viewBox="0 0 16 16"><path d="M.5 1.500h15v11h-4.500l-3 3-3-3H.500z" fill="none" stroke="#fff" stroke-width="1.200" /></svg>
    </aside>
  </div>
</template>

<style>
html, body { margin: 0; overflow: hidden; background: #fff; }
</style>

<style scoped>
* { box-sizing: border-box; }
svg { flex: none; display: block; }
.screen { width: 1366px; height: 768px; display: grid; grid-template-columns: 1288px 78px; grid-template-rows: 766px 2px; font-family: Roboto, sans-serif; color: #333; overflow: hidden; }
.defs { position: absolute; }
span { display: inline-block; white-space: nowrap; }
.window { border: 1px solid #69696b; border-top-color: #66666c; display: grid; grid-template-rows: 30px 32px 82px 1fr 50px; background: #fff; min-height: 0; overflow: hidden; }
.titlebar { display: flex; align-items: center; padding: 0 16px 2px 9px; }
.wtitle { font: 12px "Noto Sans", sans-serif; color: #111; margin-left: 6px; }
.wctl { margin-left: auto; }
.docbar { background: #cbcbcb; display: flex; align-items: flex-end; }
.doctab { width: 893px; height: 28px; background: #f1f1f1; border-radius: 4px 4px 0 0; display: flex; align-items: center; padding: 0 7px 0 402px; font-size: 12px; color: #444; }
.doctab span { margin-left: 3px; padding-top: 1px; }
.doctab .x { margin-left: auto; }
.plus { width: 28px; height: 28px; background: #b8b8b8; margin-left: 4px; border-radius: 4px 4px 0 0; display: grid; place-items: center; }
.account { margin-left: auto; }
.ribbon { background: #f1f1f1; border-bottom: 1px solid #d7d7d7; display: flex; }
.project { width: 111px; height: 62px; margin: 10px 9px 0 11px; border: 2px solid #dedede; border-radius: 5px; display: flex; justify-content: center; align-items: center; font-size: 11.500px; font-weight: 500; gap: 5px; }
.caret { width: 0; height: 0; border: 3.500px solid transparent; border-top: 5px solid #333; border-bottom: 0; }
.tabs { display: flex; height: 25px; padding-left: 7px; font-size: 11.500px; color: #444; }
.tab { text-align: center; padding-top: 4px; line-height: 14px; }
.solid { width: 63px; color: #1b8fc8; border-bottom: 3px solid #1b93d2; }
.surface { width: 121px; }
.sheet { width: 73px; }
.tools { width: 125px; }
.groups { display: flex; height: 56px; }
.group { display: flex; flex-direction: column; border-right: 2px solid #dedede; height: 53px; margin-top: 1px; }
.icons { display: flex; gap: 9px; height: 34px; }
.tool { width: 34px; height: 34px; }
.glabel { display: flex; gap: 3px; align-items: center; font-size: 11.500px; height: 18px; margin-top: 3px; color: #383838; }
.crea { width: 264px; padding-left: 6px; }
.crea .glabel { padding-left: 102px; }
.modifica { width: 269px; padding-left: 10px; }
.modifica .glabel { padding-left: 93px; }
.assembla { width: 98px; padding-left: 9px; }
.assembla .glabel { padding-left: 4px; }
.costruzione { width: 109px; padding-left: 13px; }
.costruzione .icons { padding-left: 24px; }
.verifica { width: 84px; padding-left: 13px; }
.verifica .icons { padding-left: 12px; }
.inserisci { width: 97px; padding-left: 12px; }
.inserisci .icons { gap: 7px; }
.inserisci .glabel { padding-left: 5px; }
.seleziona { width: 100px; padding-left: 13px; border: 0; }
.seleziona .icons { padding-left: 15px; }
.seleziona .tool { width: 38px; height: 38px; margin-top: -3px; }
.viewport { position: relative; min-height: 0; }
.scene { position: absolute; inset: 0; }
.side { position: relative; width: 300px; height: 100%; margin-left: 4px; padding-top: 4px; display: flex; flex-direction: column; }
.phead { height: 25px; background: #f1f1f1; border: 1px solid #ccc; display: flex; align-items: center; padding: 0 1px 0 3px; font-size: 11px; color: #777; }
.phead > span { margin-left: 9px; }
.pbtn { margin-left: auto; }
.comments { margin: auto 0 4px; border-top: 0; }
.comments > span { margin-left: 21px; }
.tree { padding-top: 3px; font: 11px "Liberation Sans", Arial, sans-serif; color: #333; }
.row { height: 24px; display: flex; align-items: center; padding-left: 36px; }
.row.root { padding-left: 16px; }
.row.deep { padding-left: 54px; }
.arr { margin-right: 8px; }
.arr.op { margin: 0 8px 0 -2px; }
.pill { height: 20px; background: #f1f1f1; display: flex; align-items: center; padding-left: 3px; }
.pill .eye { margin-right: 9px; }
.pill .kind { margin-right: 14px; }
.root .pill { width: 148px; margin-left: 8px; }
.chosen { width: 98px; height: 16px; background: #969696; margin: 0 3.500px 0 6px; padding-left: 3px; display: flex; align-items: center; gap: 14px; color: #fff; font-weight: 700; }
.navbar { position: absolute; left: 516px; top: 542px; background: #f1f1f1; }
.timeline { background: #f1f1f1; border-top: 2px solid #ccc; display: flex; padding: 9px 13px 0 10px; }
.play { margin-top: 8px; overflow: visible; }
.history { display: flex; margin-left: 20px; position: relative; height: 32px; }
.step { width: 24px; padding: 6px 4px 0; border-bottom: 2px solid #ccc; position: relative; }
.step:first-child { border-image: linear-gradient(90deg, transparent 50%, #ccc 50%) 2; }
.step:nth-child(28) { border-image: linear-gradient(90deg, #ccc 54%, transparent 54%) 2; }
.step::after { content: ""; position: absolute; left: 12px; bottom: 0; width: 2px; height: 5px; background: #ccc; }
.marker { position: absolute; right: -6px; top: 0; }
.settings { margin: 7px 0 0 auto; }
.behind { grid-column: 1; grid-row: 2; position: relative; background: #c5c7c3; overflow: hidden; font: 14px/14px Roboto, sans-serif; color: #444; }
.behind span { position: absolute; top: -9px; }
.b1 { left: 26px; }
.like { position: absolute; left: 332px; width: 20px; height: 2px; background: #1559a7; }
.dislike { position: absolute; left: 434px; width: 16px; height: 2px; background: #555; }
.behind .b2 { left: 362px; color: #1559a7; font-weight: 500; }
.b3 { left: 463px; }
.b4 { left: 545px; }
.b5 { left: 643px; }
.b6 { left: 745px; }
.taskbar { grid-column: 2; grid-row: 1 / 3; background: linear-gradient(#303a45 0, #343a42 48%, #2a3030 65%, #302d29 80%, #302d2a 100%); display: flex; flex-direction: column; color: #fff; border-bottom: 4px solid #383633; }
.slot { height: 47px; display: grid; place-items: center; flex: none; }
.sys { height: 40px; }
.first { margin-top: 3px; }
.run { border-right: 2px solid #76b9ed; padding-left: 2px; margin-bottom: 1px; height: 46px; }
.active { background: #5b6066; }
.tray { margin-top: auto; }
.clock { padding-top: 14px; display: flex; flex-direction: column; align-items: center; font: 12px/17.300px "Open Sans", sans-serif; box-sizing: content-box; height: 54px; }
.note { margin: 15px auto 19px; }
</style>
